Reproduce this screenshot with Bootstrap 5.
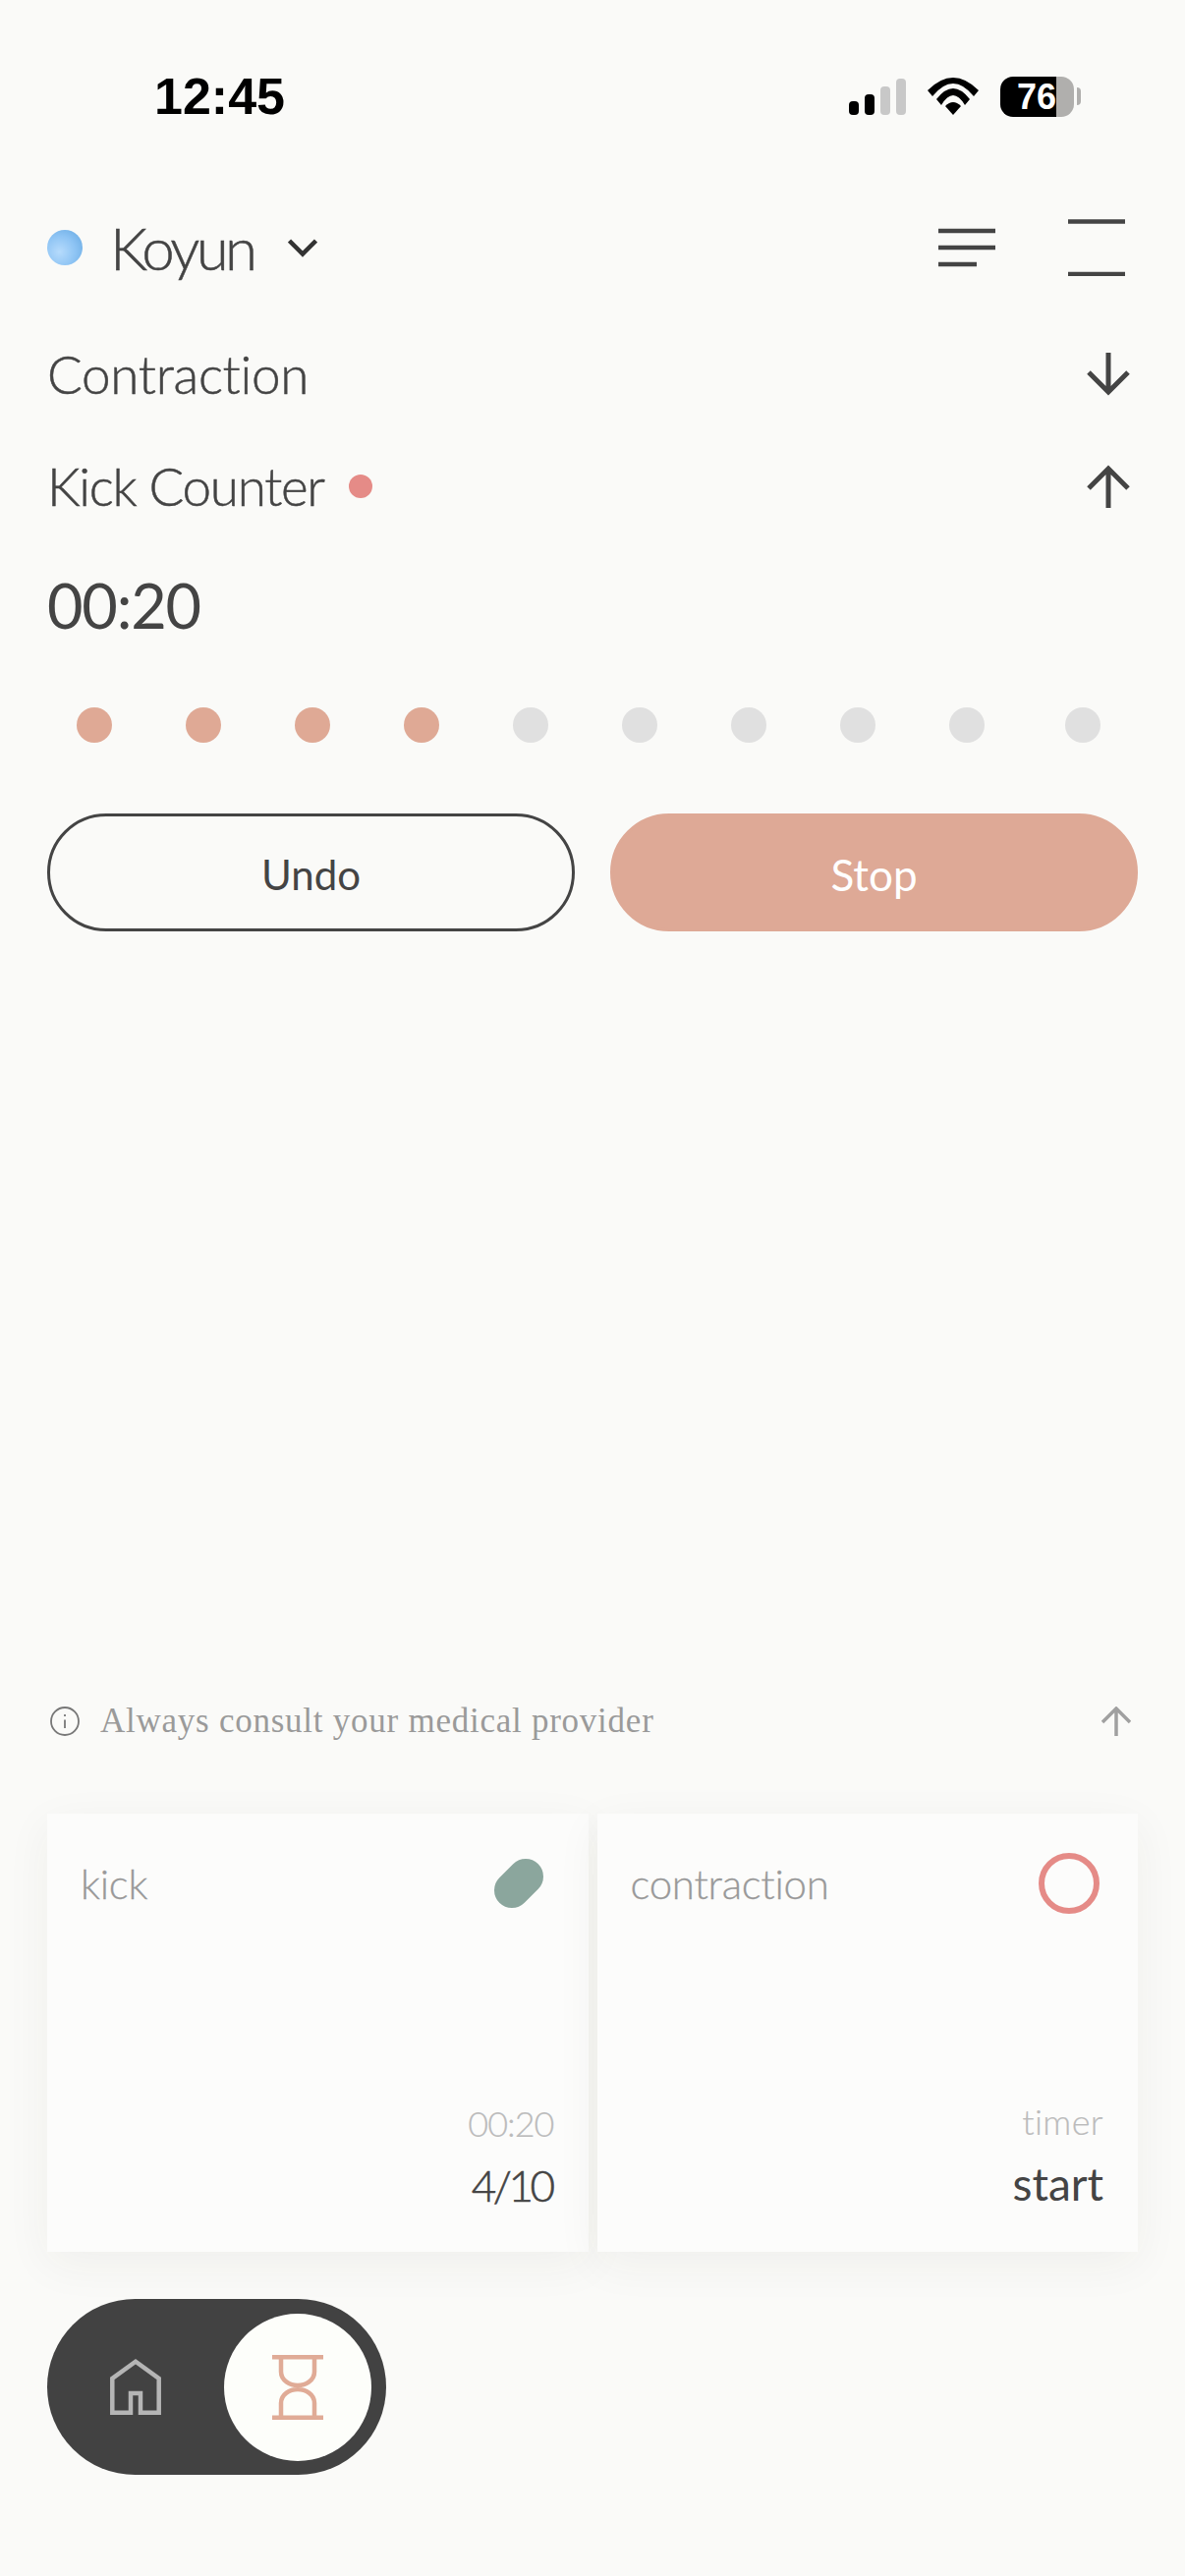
<!DOCTYPE html>
<html lang="en">
<head>
<meta charset="utf-8">
<title>Kick Counter</title>
<link rel="stylesheet" href="https://cdn.jsdelivr.net/npm/bootstrap@5.3.0/dist/css/bootstrap.min.css">
<script src="https://cdn.jsdelivr.net/npm/bootstrap@5.3.0/dist/js/bootstrap.bundle.min.js"></script>
<style>
html, body { margin: 0; background: #fafaf8; }
body { font-family: "Lato", "Noto Sans", sans-serif; color: #444; }
svg { display: block; flex: none; }
.app-page { width: 1206px; height: 2622px; padding: 0 48px 103px; overflow: hidden; }
.status-bar { height: 130px; margin: 33px -48px 0; padding: 0 106px 0 157px; }
.clock { font: 700 52px/1 "Liberation Sans", sans-serif; color: #000; }
.status-icons { gap: 22px; }
.signal { gap: 6px; align-items: flex-end; height: 37px; }
.signal i { display: block; width: 10px; border-radius: 4px; background: #000; }
.signal i.off { background: #c8c8c8; }
.battery { height: 41px; width: 75px; border-radius: 13px; overflow: hidden; }
.battery-fill { width: 57px; background: #000; color: #fff; font: 700 36px/41px "Liberation Sans", sans-serif; text-align: right; }
.battery-rest { flex: 1; background: #b0afad; }
.battery-nub { width: 4px; height: 18px; background: #b0afad; border-radius: 0 9px 9px 0; margin-left: 3px; }
.head-row { height: 100px; margin-top: 39px; }
.avatar-dot { width: 36px; height: 36px; border-radius: 50%; background: radial-gradient(circle at 35% 62%, #b6dbfc 0, #8ec4f4 50%, #62a6e0 100%); margin-right: 32px; }
.name-text { font-size: 60px; font-weight: 300; -webkit-text-stroke: .5px #444; letter-spacing: -3.6px; line-height: 1; margin-left: -4px; margin-right: 35px; }
.tool-gap { gap: 74px; padding-right: 13px; }
.sect-row { height: 114px; font-size: 53px; font-weight: 300; -webkit-text-stroke: .5px #444; padding-right: 8px; }
.sect-first { margin-top: 22px; letter-spacing: -.3px; }
.sect-second { letter-spacing: -1.3px; }
.rec-dot { width: 24px; height: 24px; border-radius: 50%; background: #e58b87; margin-left: 25px; }
.elapsed { height: 104px; margin-top: 12px; font-size: 63px; font-weight: 400; letter-spacing: -1.2px; line-height: 104px; }
.dot-row { margin-top: 52px; padding-left: 30px; gap: 75px; }
.kick-dot { width: 36px; height: 36px; border-radius: 50%; background: #e0e0e0; }
.kick-dot.done { background: #dfa995; }
.kick-dot.last { margin-left: 7px; }
.act-row { margin-top: 72px; gap: 36px; }
.act-btn { flex: 1; height: 120px; border-radius: 60px; font-size: 42px; font-weight: 400; line-height: 1; padding: 3px 0 0; }
.act-undo { border: 3px solid #444; color: #444; background: transparent; }
.act-stop { border: 3px solid #dea996; background: #dea996; color: #fff; font-size: 44px; }
.note-row { margin-top: auto; height: 30px; padding: 0 7px 0 3px; }
.note-text { font: 400 35px/30px "Liberation Serif", serif; color: #9a9a9a; margin-left: 21px; letter-spacing: .75px; }
.stat-row { margin-top: 79px; gap: 9px; }
.stat-card { flex: 1; height: 446px; border: 0; border-radius: 0; background: #fcfcfb; box-shadow: 0 12px 44px rgba(60,50,40,.055); padding: 40px 35px 46px 34px; }
.stat-title { font-size: 42px; font-weight: 300; -webkit-text-stroke: .3px #999; color: #999; letter-spacing: -.25px; line-height: 1; margin-top: 10px; }
.stat-sub { font-size: 36px; font-weight: 300; color: #bbb; -webkit-text-stroke: .2px #bbb; letter-spacing: -1px; line-height: 1; }
.stat-sub.word { letter-spacing: .4px; }
.stat-val { font-size: 46px; font-weight: 400; color: #444; line-height: 1; margin-top: 23px; letter-spacing: 0; }
.stat-val.frac { font-size: 44px; letter-spacing: -3.5px; font-weight: 300; -webkit-text-stroke: .6px #444; margin-right: 2px; }
.pill-slot { margin-top: 6px; margin-right: 11px; overflow: visible; }
.ring-slot { margin-right: 4px; }
.nav-toggle { margin-top: 48px; width: 345px; height: 179px; background: #424242; border-radius: 90px; padding: 0 15px 0 64px; }
.nav-active { width: 150px; height: 150px; border-radius: 50%; background: #fdfefa; }
</style>
</head>
<body>
<div class="app-page d-flex flex-column">

  <div class="status-bar d-flex align-items-center justify-content-between">
    <div class="clock">12:45</div>
    <div class="status-icons d-flex align-items-center">
      <div class="signal d-flex">
        <i style="height:14px"></i><i style="height:21px"></i><i class="off" style="height:29px"></i><i class="off" style="height:37px"></i>
      </div>
      <svg width="52" height="38" viewBox="0 0 52 38" fill="#000" aria-hidden="true">
        <path d="M0 13Q26-13 52 13L47 19Q26-7 5 19Z"/>
        <path d="M9 22Q26 0 43 22L38 28Q26 8 14 28Z"/>
        <path d="M26 38L18 29Q26 21 34 29Z"/>
      </svg>
      <div class="d-flex align-items-center">
        <div class="battery d-flex">
          <div class="battery-fill">76</div>
          <div class="battery-rest"></div>
        </div>
        <div class="battery-nub"></div>
      </div>
    </div>
  </div>

  <div class="head-row d-flex align-items-center justify-content-between">
    <div class="d-flex align-items-center">
      <span class="avatar-dot"></span>
      <span class="name-text">Koyun</span>
      <svg width="30" height="19" viewBox="0 0 30 19" fill="none" stroke="#333" stroke-width="4.5" aria-hidden="true"><path d="M1.5 2L15 15.5 28.5 2"/></svg>
    </div>
    <div class="d-flex align-items-center tool-gap">
      <svg width="58" height="40" viewBox="0 0 58 40" fill="none" stroke="#444" stroke-width="4.5" aria-hidden="true"><path d="M0 3H58M0 20H58M0 37H39"/></svg>
      <svg width="58" height="58" viewBox="0 0 58 58" fill="none" stroke="#444" stroke-width="4.5" aria-hidden="true"><path d="M0 2.5H58M0 56H58"/></svg>
    </div>
  </div>

  <div class="sect-row sect-first d-flex align-items-center justify-content-between">
    <span>Contraction</span>
    <svg width="44" height="44" viewBox="0 0 44 44" fill="none" stroke="#444" stroke-width="5" aria-hidden="true"><path d="M22 0V41M2 20L22 40 42 20"/></svg>
  </div>
  <div class="sect-row sect-second d-flex align-items-center justify-content-between">
    <span class="d-flex align-items-center">Kick Counter<span class="rec-dot"></span></span>
    <svg width="44" height="44" viewBox="0 0 44 44" fill="none" stroke="#444" stroke-width="5" aria-hidden="true"><path d="M22 44V3M2 24L22 4 42 24"/></svg>
  </div>

  <div class="elapsed">00:20</div>

  <div class="dot-row d-flex">
    <span class="kick-dot done"></span><span class="kick-dot done"></span><span class="kick-dot done"></span><span class="kick-dot done"></span>
    <span class="kick-dot"></span><span class="kick-dot"></span><span class="kick-dot"></span><span class="kick-dot"></span><span class="kick-dot"></span><span class="kick-dot last"></span>
  </div>

  <div class="act-row d-flex">
    <button type="button" class="btn act-btn act-undo">Undo</button>
    <button type="button" class="btn act-btn act-stop">Stop</button>
  </div>

  <div class="note-row d-flex align-items-center justify-content-between">
    <div class="d-flex align-items-center">
      <svg width="30" height="30" viewBox="0 0 30 30" fill="none" stroke="#777" stroke-width="1.8" aria-hidden="true"><circle cx="15" cy="15" r="14"/><path d="M15 13.5V22"/><path d="M15 8V10"/></svg>
      <span class="note-text">Always consult your medical provider</span>
    </div>
    <svg width="30" height="30" viewBox="0 0 30 30" fill="none" stroke="#a0a0a0" stroke-width="3.5" aria-hidden="true"><path d="M15 30V2M1 16L15 2 29 16"/></svg>
  </div>

  <div class="stat-row d-flex">
    <div class="card stat-card d-flex flex-column">
      <div class="d-flex justify-content-between align-items-start">
        <span class="stat-title">kick</span>
        <svg class="pill-slot" width="50" height="50" viewBox="0 0 50 50" aria-hidden="true"><path d="M18 32L32 18" stroke="#8ba69d" stroke-width="36" stroke-linecap="round"/></svg>
      </div>
      <div class="mt-auto text-end">
        <div class="stat-sub">00:20</div>
        <div class="stat-val frac">4/10</div>
      </div>
    </div>
    <div class="card stat-card d-flex flex-column">
      <div class="d-flex justify-content-between align-items-start">
        <span class="stat-title">contraction</span>
        <svg class="ring-slot" width="62" height="62" viewBox="0 0 62 62" fill="none" stroke="#e58b87" stroke-width="6" aria-hidden="true"><circle cx="31" cy="31" r="28"/></svg>
      </div>
      <div class="mt-auto text-end">
        <div class="stat-sub word">timer</div>
        <div class="stat-val">start</div>
      </div>
    </div>
  </div>

  <div class="nav-toggle d-flex align-items-center justify-content-between">
    <svg width="52" height="57" viewBox="0 0 52 57" fill="none" stroke="#b5b5b5" stroke-width="4.5" aria-hidden="true"><path d="M2.3 54.7V20L26 2.8 49.7 20V54.7H31V35H21V54.7Z"/></svg>
    <div class="nav-active d-flex align-items-center justify-content-center">
      <svg width="52" height="66" viewBox="0 0 52 66" fill="none" stroke="#e0ab96" stroke-width="4.5" aria-hidden="true"><path d="M0 2.3H52M0 63.7H52M9 2.3V17C9 26 18 31 26 31C34 31 43 26 43 17V2.3M9 63.7V49C9 40 18 35 26 35C34 35 43 40 43 49V63.7"/></svg>
    </div>
  </div>
</div>
</body>
</html>
